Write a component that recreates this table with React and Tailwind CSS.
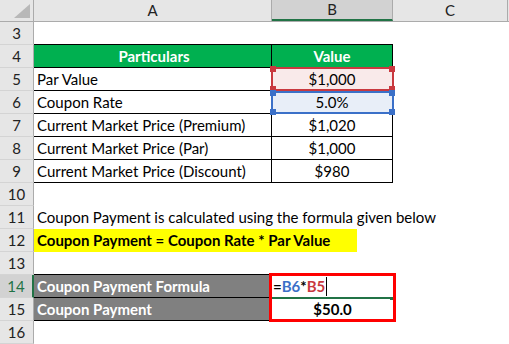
import React from "react";

const FONT = { fontFamily: "Lato, 'Open Sans', sans-serif" };

function RowHead({ n, selected }) {
  return (
    <div
      className={
        "w-[34px] shrink-0 flex items-center justify-center text-[15px] border-b border-b-[#d4d4d4] " +
        (selected
          ? "bg-[#d2d2d2] text-[#217346] border-r-2 border-r-[#217346]"
          : "bg-[#e6e6e6] text-[#222] border-r border-r-[#ababab]")
      }
    >
      {n}
    </div>
  );
}

function Row({ n, selected, children }) {
  return (
    <div className="flex h-[23px]">
      <RowHead n={n} selected={selected} />
      {children}
    </div>
  );
}

function Corners({ color }) {
  return (
    <>
      <div className={"absolute -left-[3px] -top-[3px] w-[6px] h-[6px] " + color} />
      <div className={"absolute -right-[3px] -top-[3px] w-[6px] h-[6px] " + color} />
      <div className={"absolute -left-[3px] -bottom-[3px] w-[6px] h-[6px] " + color} />
      <div className={"absolute -right-[3px] -bottom-[3px] w-[6px] h-[6px] " + color} />
    </>
  );
}

export default function App() {
  const cellA = "w-[238px] shrink-0 flex items-center pl-[3px] whitespace-nowrap text-[15px] text-black";
  const cellB = "w-[121px] shrink-0 flex items-center justify-center text-[15px] text-black";
  const tb = " border-b border-b-black border-r border-r-black";
  return (
    <div className="w-[509px] h-[344px] overflow-hidden bg-white" style={FONT}>
      {/* Column headers */}
      <div className="flex h-[22px] bg-[#e6e6e6] border-b border-b-[#ababab]">
        <div className="w-[34px] shrink-0 relative border-r border-r-[#ababab]">
          <svg className="absolute left-[14px] top-[4px]" width="16" height="14" viewBox="0 0 16 14">
            <polygon points="16,0 16,14 0,14" fill="#b8b8b8" />
          </svg>
        </div>
        <div className="w-[238px] shrink-0 flex items-center justify-center text-[15px] text-[#222] border-r border-r-[#ababab]">
          A
        </div>
        <div className="w-[121px] shrink-0 flex items-center justify-center text-[15px] text-[#222] bg-[#d2d2d2] border-r border-r-[#ababab] border-b-2 border-b-[#217346]">
          B
        </div>
        <div className="w-[115px] shrink-0 flex items-center justify-center text-[15px] text-[#222] border-r border-r-[#ababab]">
          C
        </div>
      </div>

      <Row n="3">
        <div className={cellA + " border-b border-b-black"} />
        <div className={cellB + " border-b border-b-black"} />
      </Row>
      <Row n="4">
        <div className={cellA + tb + " bg-[#00b050] justify-center font-bold text-white"}>Particulars</div>
        <div className={cellB + tb + " bg-[#00b050] font-bold text-white"}>Value</div>
      </Row>
      <Row n="5">
        <div className={cellA + tb}>Par Value</div>
        <div className={cellB + tb + " bg-[#f9eaea] relative"}>
          $1,000
          <div className="absolute -left-[1px] -top-[1px] w-[123px] h-[24px] border-2 border-[#c9393f]">
            <Corners color="bg-[#c9393f]" />
          </div>
        </div>
      </Row>
      <Row n="6">
        <div className={cellA + tb}>Coupon Rate</div>
        <div className={cellB + tb + " bg-[#e8eef8] relative"}>
          5.0%
          <div className="absolute -left-[1px] top-0 w-[123px] h-[23px] border-2 border-[#3b70c8]">
            <Corners color="bg-[#3b70c8]" />
          </div>
        </div>
      </Row>
      <Row n="7">
        <div className={cellA + tb}>Current Market Price (Premium)</div>
        <div className={cellB + tb}>$1,020</div>
      </Row>
      <Row n="8">
        <div className={cellA + tb}>Current Market Price (Par)</div>
        <div className={cellB + tb}>$1,000</div>
      </Row>
      <Row n="9">
        <div className={cellA + tb}>Current Market Price (Discount)</div>
        <div className={cellB + tb}>$980</div>
      </Row>
      <Row n="10" />
      <Row n="11">
        <div className={cellA + " overflow-visible"}>
          Coupon Payment is calculated using the formula given below
        </div>
      </Row>
      <Row n="12">
        <div className="w-[323px] shrink-0 flex items-center pl-[3px] whitespace-nowrap text-[15px] font-bold text-black bg-[#ffff00]">
          Coupon Payment = Coupon Rate * Par Value
        </div>
      </Row>
      <Row n="13">
        <div className={cellA + " border-b border-b-black"} />
      </Row>
      <Row n="14" selected>
        <div className={cellA + " bg-[#808080] text-white font-bold border-b border-b-black"}>
          Coupon Payment Formula
        </div>
        <div className={cellB + " relative justify-start pl-[1px] font-bold"}>
          <span className="text-black">=</span>
          <span className="text-[#3b70c8]">B6</span>
          <span className="text-black">*</span>
          <span className="text-[#c9393f]">B5</span>
          <span className="ml-[1px] w-[1px] h-[19px] bg-black" />
          <div className="absolute left-0 -bottom-[1px] w-[120px] h-[2px] bg-[#217346]" />
          <div className="absolute left-[118px] -bottom-[2px] w-[3px] h-[3px] bg-[#217346]" />
          <div className="absolute -left-[3px] -top-[2px] w-[127px] h-[49px] border-[3px] border-[#ff0000]" />
        </div>
      </Row>
      <Row n="15">
        <div className={cellA + " bg-[#808080] text-white font-bold border-b border-b-black"}>
          Coupon Payment
        </div>
        <div className={cellB + " font-bold"}>$50.0</div>
      </Row>
      <Row n="16" />
    </div>
  );
}
